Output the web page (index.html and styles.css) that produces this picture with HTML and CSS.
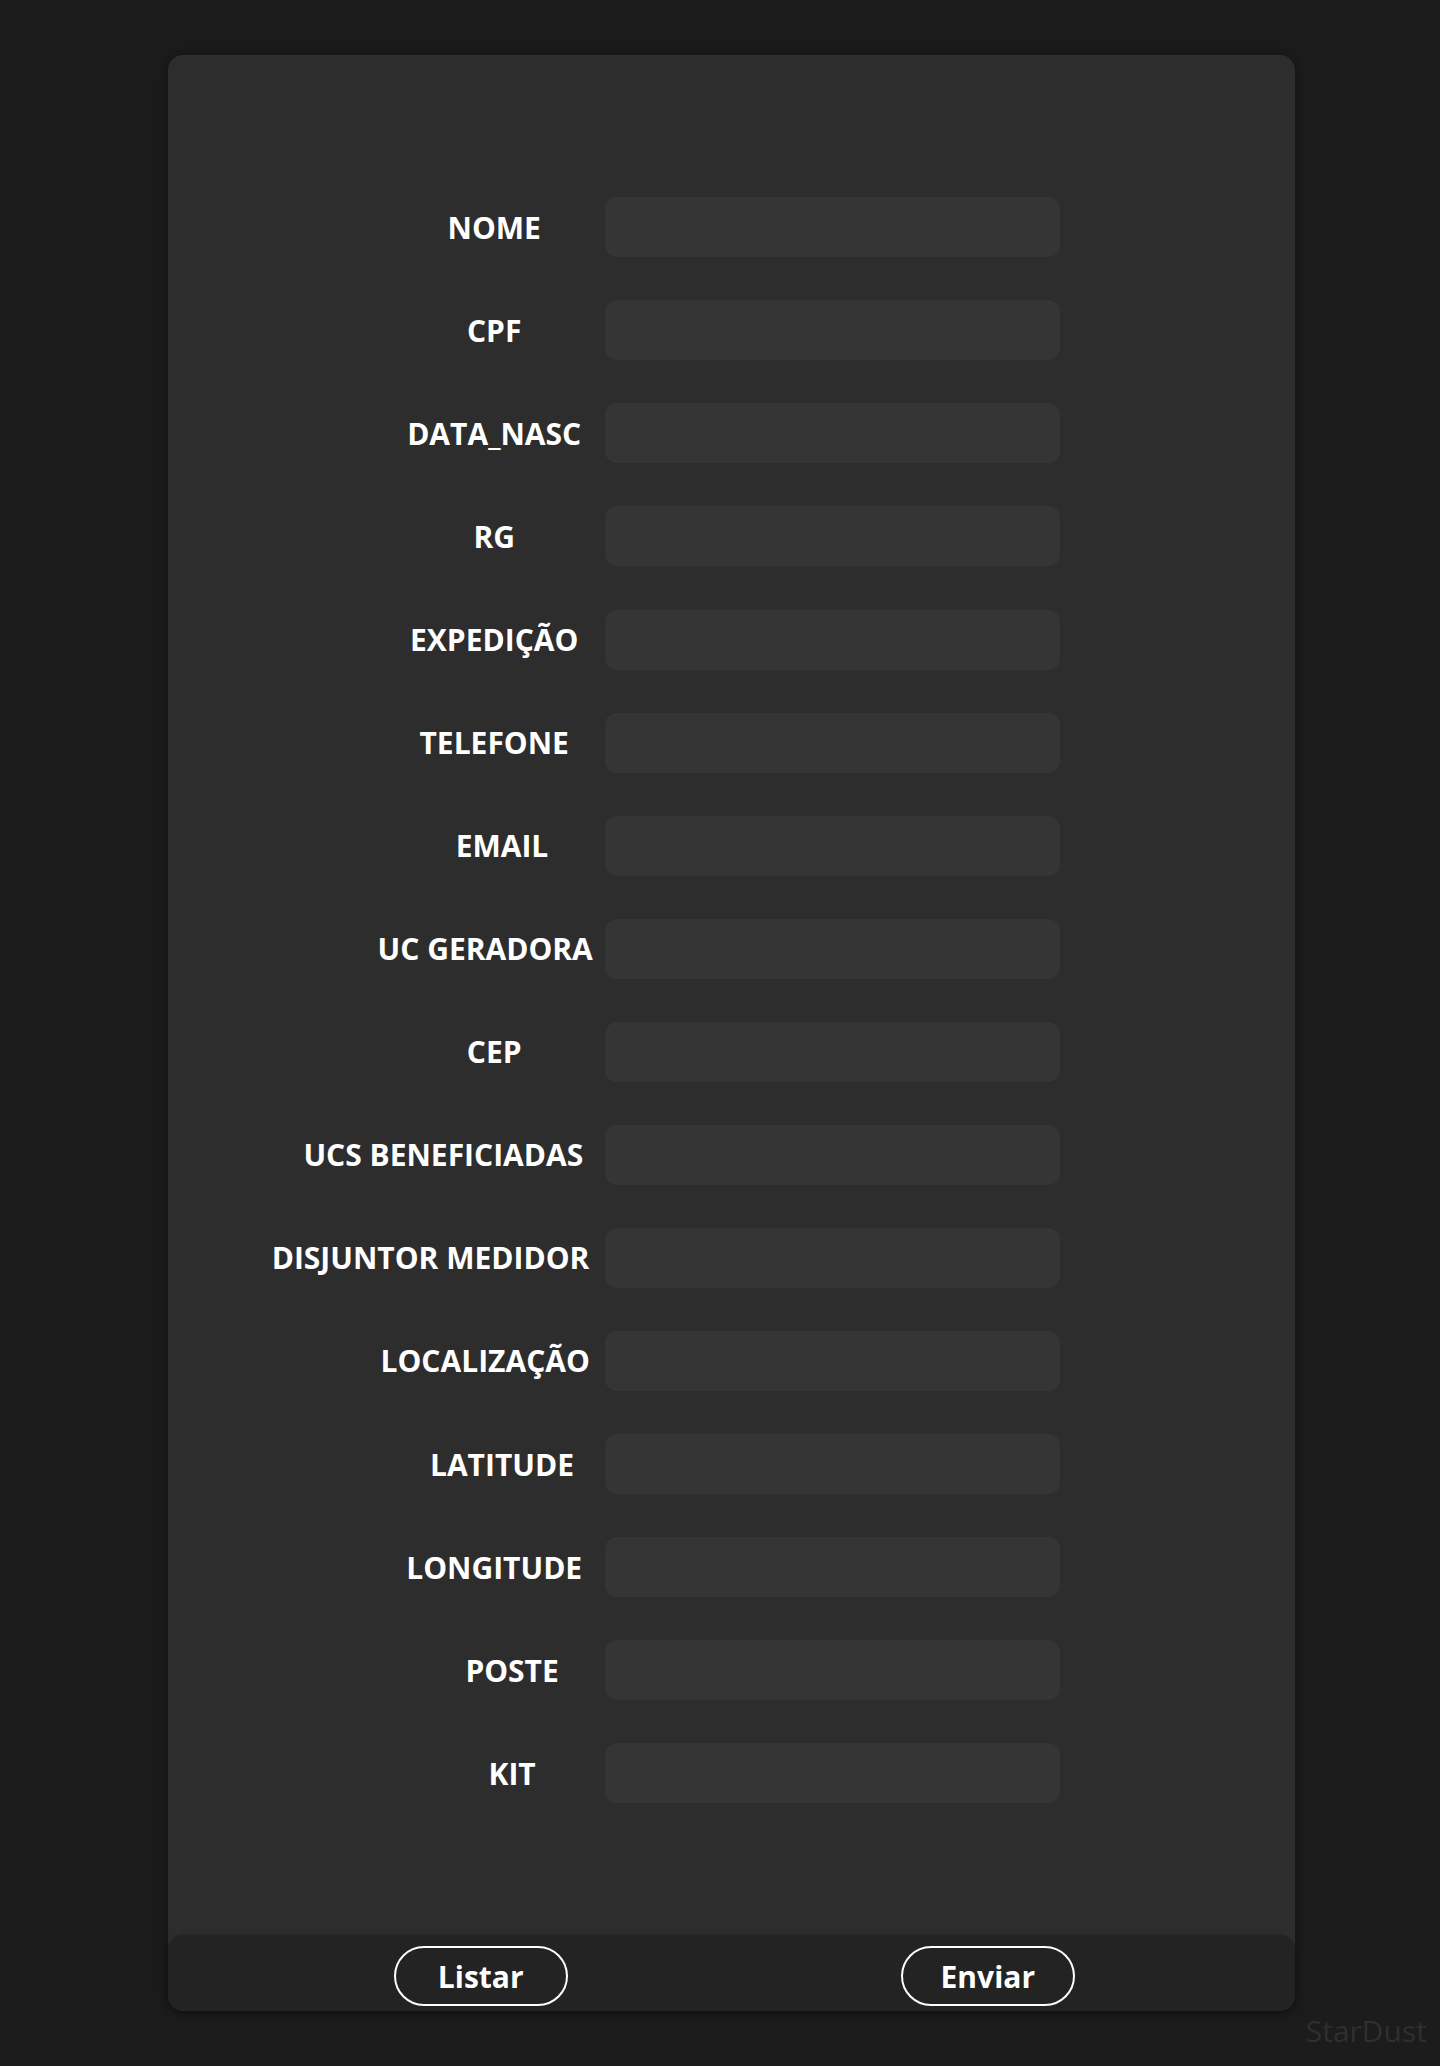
FILE: index.html
```html
<!DOCTYPE html>
<html lang="pt-BR">
<head>
<meta charset="utf-8">
<title>Cadastro</title>
<link rel="stylesheet" href="styles.css">
</head>
<body>
<main class="card">
  <form class="form">
    <div class="field"><label class="label"><span>NOME</span></label><input class="input" type="text"></div>
    <div class="field"><label class="label"><span>CPF</span></label><input class="input" type="text"></div>
    <div class="field"><label class="label"><span>DATA_NASC</span></label><input class="input" type="text"></div>
    <div class="field"><label class="label"><span>RG</span></label><input class="input" type="text"></div>
    <div class="field"><label class="label"><span>EXPEDIÇÃO</span></label><input class="input" type="text"></div>
    <div class="field"><label class="label"><span>TELEFONE</span></label><input class="input" type="text"></div>
    <div class="field"><label class="label label--r8"><span>EMAIL</span></label><input class="input" type="text"></div>
    <div class="field"><label class="label label--l9"><span>UC GERADORA</span></label><input class="input" type="text"></div>
    <div class="field"><label class="label"><span>CEP</span></label><input class="input" type="text"></div>
    <div class="field"><label class="label label--l51"><span>UCS BENEFICIADAS</span></label><input class="input" type="text"></div>
    <div class="field"><label class="label label--l64"><span>DISJUNTOR MEDIDOR</span></label><input class="input" type="text"></div>
    <div class="field"><label class="label label--l9"><span>LOCALIZAÇÃO</span></label><input class="input" type="text"></div>
    <div class="field"><label class="label label--r8"><span>LATITUDE</span></label><input class="input" type="text"></div>
    <div class="field"><label class="label"><span>LONGITUDE</span></label><input class="input" type="text"></div>
    <div class="field"><label class="label label--r18"><span>POSTE</span></label><input class="input" type="text"></div>
    <div class="field"><label class="label label--r18"><span>KIT</span></label><input class="input" type="text"></div>
  </form>
  <footer class="actions">
    <button class="btn" type="button">Listar</button>
    <button class="btn" type="button">Enviar</button>
  </footer>
</main>
<div class="brand">StarDust</div>
</body>
</html>
```
FILE: styles.css
```css
* { box-sizing: border-box; }

html, body {
  margin: 0;
  padding: 0;
}

body {
  background: #1c1c1c;
  font-family: "Open Sans", "Noto Sans", "Liberation Sans", sans-serif;
  color: #ffffff;
  min-height: 2066px;
  padding-top: 55px;
}

.card {
  margin-left: 168px;
  width: 1127px;
  background: #2d2d2d;
  border-radius: 15px;
  box-shadow: 0 0 18px rgba(0, 0, 0, 0.35);
  display: flex;
  flex-direction: column;
}

.form {
  display: flex;
  flex-direction: column;
  gap: 43.07px;
  padding: 142.3px 0 0 231.2px;
  margin: 0;
}

.field {
  display: flex;
  align-items: center;
  height: 60px;
  gap: 15.8px;
}

.label {
  width: 190px;
  flex: none;
  display: flex;
  justify-content: center;
  font-size: 30px;
  font-weight: 700;
  white-space: nowrap;
  color: #ffffff;
}

.label span { flex: none; }

.label--r8 { padding-left: 15.6px; }
.label--r18 { padding-left: 35.8px; }
.label--l9 { padding-right: 18px; }
.label--l51 { padding-right: 101.8px; }
.label--l64 { padding-right: 127.4px; }

.input {
  width: 455px;
  height: 60px;
  flex: none;
  border: none;
  outline: none;
  border-radius: 12px;
  background: #353535;
  color: #ffffff;
  font-family: inherit;
  font-size: 24px;
  padding: 0 16px;
}

.actions {
  margin-top: 131.7px;
  height: 75.7px;
  background: #232323;
  border-radius: 15px;
  display: flex;
  align-items: flex-start;
  padding: 11.3px 0 0 225.8px;
  gap: 333.3px;
  box-shadow: 0 2px 6px rgba(0, 0, 0, 0.25);
}

.btn {
  width: 173.8px;
  height: 60px;
  border: 2px solid #ffffff;
  border-radius: 30px;
  background: transparent;
  color: #ffffff;
  font-family: inherit;
  font-size: 30px;
  font-weight: 700;
  padding: 0;
  display: flex;
  align-items: center;
  justify-content: center;
  cursor: pointer;
}

.brand {
  position: fixed;
  right: 13px;
  bottom: 15px;
  font-size: 30px;
  font-weight: 400;
  color: #2f2f2f;
}
```
